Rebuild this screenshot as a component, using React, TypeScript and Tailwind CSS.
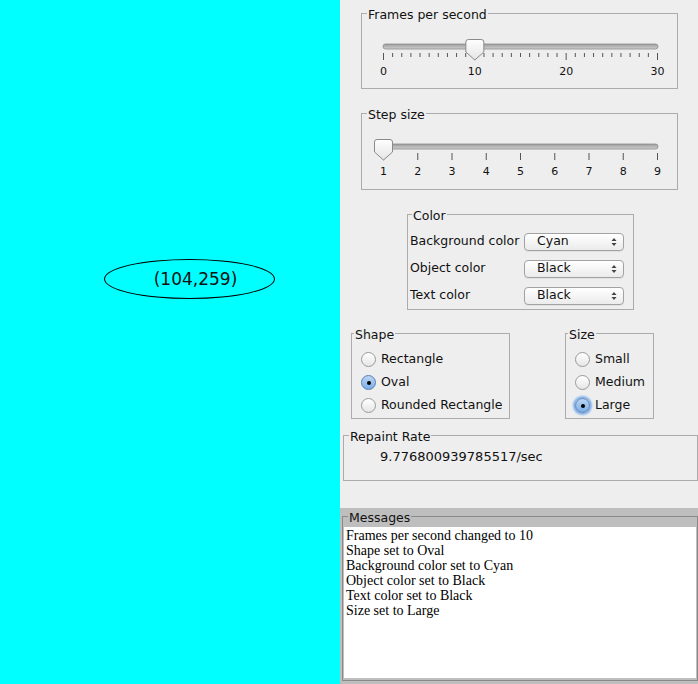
import React from "react";

const ui = "font-['DejaVu_Sans',sans-serif]";

function Slider({
  min,
  max,
  value,
  minor,
  major,
}: {
  min: number;
  max: number;
  value: number;
  minor: number;
  major: number;
}) {
  const x0 = 21;
  const x1 = 295;
  const pos = (v: number) => x0 + ((v - min) / (max - min)) * (x1 - x0);
  const ticks: { v: number; big: boolean }[] = [];
  for (let v = min; v <= max; v += minor) {
    ticks.push({ v, big: (v - min) % major === 0 });
  }
  const cx = pos(value) + 0.5;
  return (
    <svg width="314" height="60" className="block">
      <defs>
        <linearGradient id="trk" x1="0" y1="0" x2="0" y2="1">
          <stop offset="0" stopColor="#9c9c9c" />
          <stop offset="1" stopColor="#d0d0d0" />
        </linearGradient>
        <linearGradient id="thm" x1="0" y1="0" x2="0" y2="1">
          <stop offset="0" stopColor="#ffffff" />
          <stop offset="1" stopColor="#e4e4e4" />
        </linearGradient>
      </defs>
      <rect x={x0} y="23" width={x1 - x0 + 1} height="5" rx="2.5" fill="url(#trk)" stroke="#8c8c8c" strokeWidth="0.8" />
      {ticks.map((t) => (
        <line
          key={t.v}
          x1={pos(t.v) + 0.5}
          x2={pos(t.v) + 0.5}
          y1="32"
          y2={t.big ? 39 : 36}
          stroke="#555"
          strokeWidth="1"
        />
      ))}
      {ticks
        .filter((t) => t.big)
        .map((t) => (
          <text
            key={"l" + t.v}
            x={pos(t.v) + 0.5}
            y="54"
            textAnchor="middle"
            fontSize="11"
            fontFamily="DejaVu Sans, sans-serif"
            fill="#111"
          >
            {t.v}
          </text>
        ))}
      <path
        d={`M${cx - 9},21 Q${cx - 9},18.5 ${cx - 6.5},18.5 L${cx + 6.5},18.5 Q${cx + 9},18.5 ${cx + 9},21 L${cx + 9},31 L${cx},39 L${cx - 9},31 Z`}
        fill="url(#thm)"
        stroke="#8a8a8a"
        strokeWidth="1"
      />
    </svg>
  );
}

function Combo({ value }: { value: string }) {
  return (
    <div className="flex h-[18px] w-[100px] items-center justify-between rounded-[4px] border border-[#a2a2a2] bg-gradient-to-b from-white to-[#ebebeb] pl-[12px] pr-[6px] shadow-[0_1px_0_rgba(0,0,0,0.05)]">
      <span className="text-[12.5px] leading-none text-[#111]">{value}</span>
      <svg width="6" height="10" viewBox="0 0 6 10">
        <path d="M3,1 L5.5,4 L0.5,4 Z" fill="#444" />
        <path d="M3,9 L5.5,6 L0.5,6 Z" fill="#444" />
      </svg>
    </div>
  );
}

function Radio({ label, checked, focus }: { label: string; checked?: boolean; focus?: boolean }) {
  return (
    <div className="flex h-[23px] items-center gap-[5px]">
      <div
        className={
          checked
            ? "flex h-[15px] w-[15px] items-center justify-center rounded-full border border-[#5b7fb0] bg-gradient-to-b from-[#bcd6f4] to-[#7aaee8]" +
              (focus ? " shadow-[0_0_2px_2px_#7eb0ea]" : "")
            : "h-[15px] w-[15px] rounded-full border border-[#9a9a9a] bg-gradient-to-b from-white to-[#e6e6e6]"
        }
      >
        {checked && <div className="h-[4px] w-[4px] rounded-full bg-black" />}
      </div>
      <span className="text-[12.5px] leading-none text-[#111]">{label}</span>
    </div>
  );
}

function Title({ children, ml = "ml-[5px]" }: { children: React.ReactNode; ml?: string }) {
  return (
    <legend className={`${ml} px-[1px] leading-[16px]`}>
      <span className="relative top-[2px]">{children}</span>
    </legend>
  );
}

export default function App() {
  return (
    <div className={`flex h-[684px] w-[698px] overflow-hidden ${ui}`}>
      <div className="relative w-[340px] bg-[#00ffff]">
        <div className="absolute left-[104px] top-[259px] flex h-[40px] w-[171px] items-center justify-center rounded-[50%] border border-black pl-[12px]">
          <span className="text-[17px] leading-none text-[#111]">(104,259)</span>
        </div>
      </div>

      <div className="flex w-[358px] flex-col bg-[#eeeeee] text-[12.5px] text-[#111]">
        <fieldset className="ml-[21px] mt-[5px] h-[84px] w-[317px] border border-[#ababab]">
          <Title>Frames per second</Title>
          <Slider min={0} max={30} value={10} minor={1} major={10} />
        </fieldset>

        <fieldset className="ml-[21px] mt-[16px] h-[85px] w-[317px] border border-[#ababab]">
          <Title>Step size</Title>
          <Slider min={1} max={9} value={1} minor={1} major={1} />
        </fieldset>

        <fieldset className="ml-[67px] mt-[16px] h-[104px] w-[227px] border border-[#ababab]">
          <Title ml="ml-[4px]">Color</Title>
          <div className="flex flex-col pl-[2px] pt-[6px]">
            {[
              ["Background color", "Cyan"],
              ["Object color", "Black"],
              ["Text color", "Black"],
            ].map(([l, v]) => (
              <div key={l} className="flex h-[27px] items-center">
                <span className="w-[114px]">{l}</span>
                <Combo value={v} />
              </div>
            ))}
          </div>
        </fieldset>

        <div className="ml-[11px] mt-[15px] flex gap-[55px]">
          <fieldset className="h-[94px] w-[159px] border border-[#ababab]">
            <Title ml="ml-[2px]">Shape</Title>
            <div className="flex flex-col pl-[9px] pt-[7px]">
              <Radio label="Rectangle" />
              <Radio label="Oval" checked />
              <Radio label="Rounded Rectangle" />
            </div>
          </fieldset>
          <fieldset className="h-[94px] w-[89px] border border-[#ababab]">
            <Title ml="ml-[2px]">Size</Title>
            <div className="flex flex-col pl-[9px] pt-[7px]">
              <Radio label="Small" />
              <Radio label="Medium" />
              <Radio label="Large" checked focus />
            </div>
          </fieldset>
        </div>

        <fieldset className="ml-[3px] mt-[8px] h-[54px] w-[355px] border border-[#ababab]">
          <Title>Repaint Rate</Title>
          <div className="pl-[36px] pt-[6px] text-[13px] leading-[16px]">9.776800939785517/sec</div>
        </fieldset>

        <div className="mt-[27px] flex-1 bg-[#bebebe] px-[2px]">
          <fieldset className="h-[173px] w-[356px] border border-[#8a8a8a]">
            <Title>Messages</Title>
            <div className="ml-[1px] mt-[3px] h-[151px] w-[352px] bg-white pl-[2px] pt-[1px] font-['Liberation_Serif',serif] text-[14px] leading-[15px] text-black">
              <div>Frames per second changed to 10</div>
              <div>Shape set to Oval</div>
              <div>Background color set to Cyan</div>
              <div>Object color set to Black</div>
              <div>Text color set to Black</div>
              <div>Size set to Large</div>
            </div>
          </fieldset>
        </div>
      </div>
    </div>
  );
}
